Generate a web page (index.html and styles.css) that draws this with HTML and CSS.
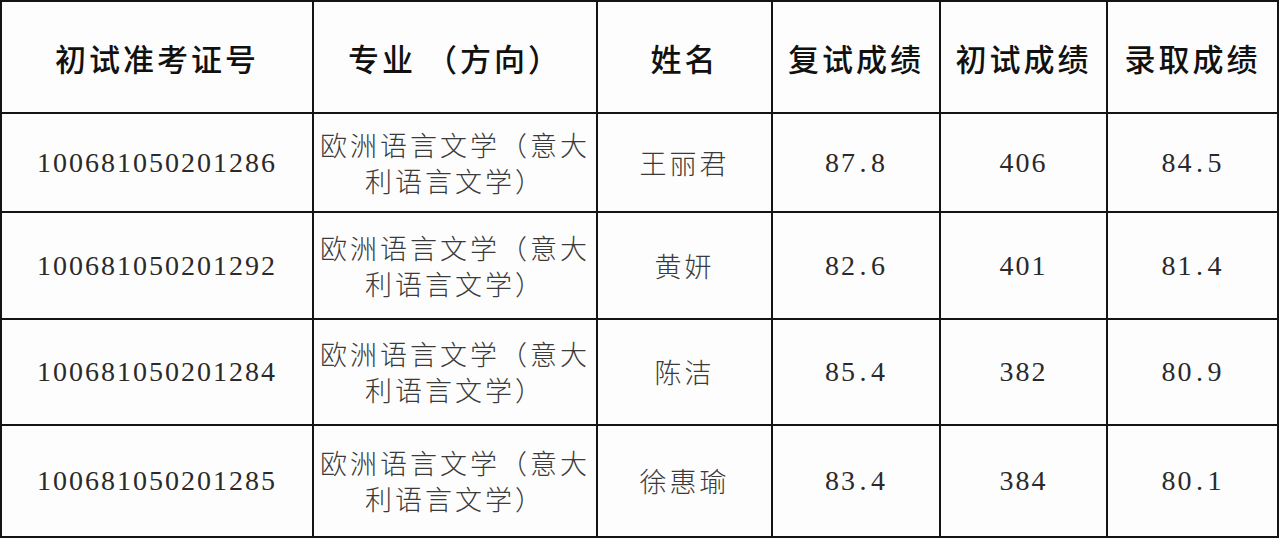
FILE: index.html
```html
<!DOCTYPE html>
<html lang="zh-CN">
<head>
<meta charset="utf-8">
<link rel="stylesheet" href="styles.css">
</head>
<body>
<table class="grid">
  <colgroup>
    <col class="c1"><col class="c2"><col class="c3"><col class="c4"><col class="c5"><col class="c6">
  </colgroup>
  <thead>
    <tr class="head">
      <th>初试准考证号</th>
      <th>专业 （方向）</th>
      <th>姓名</th>
      <th>复试成绩</th>
      <th>初试成绩</th>
      <th>录取成绩</th>
    </tr>
  </thead>
  <tbody>
    <tr class="r1">
      <td class="num">100681050201286</td>
      <td class="txt">欧洲语言文学（意大<br>利语言文学）</td>
      <td class="txt">王丽君</td>
      <td class="num">87<span class="pt">.</span>8</td>
      <td class="num">406</td>
      <td class="num">84<span class="pt">.</span>5</td>
    </tr>
    <tr class="r2">
      <td class="num">100681050201292</td>
      <td class="txt">欧洲语言文学（意大<br>利语言文学）</td>
      <td class="txt">黄妍</td>
      <td class="num">82<span class="pt">.</span>6</td>
      <td class="num">401</td>
      <td class="num">81<span class="pt">.</span>4</td>
    </tr>
    <tr class="r3">
      <td class="num">100681050201284</td>
      <td class="txt">欧洲语言文学（意大<br>利语言文学）</td>
      <td class="txt">陈洁</td>
      <td class="num">85<span class="pt">.</span>4</td>
      <td class="num">382</td>
      <td class="num">80<span class="pt">.</span>9</td>
    </tr>
    <tr class="r4">
      <td class="num">100681050201285</td>
      <td class="txt">欧洲语言文学（意大<br>利语言文学）</td>
      <td class="txt">徐惠瑜</td>
      <td class="num">83<span class="pt">.</span>4</td>
      <td class="num">384</td>
      <td class="num">80<span class="pt">.</span>1</td>
    </tr>
  </tbody>
</table>
</body>
</html>
```

FILE: styles.css
```css
html, body {
  margin: 0;
  padding: 0;
  background: #fdfdfd;
}

.grid {
  border-collapse: collapse;
  table-layout: fixed;
  width: 1279px;
  border: 2px solid #141414;
  background: #fdfdfd;
}

.c1 { width: 312px; }
.c2 { width: 284px; }
.c3 { width: 175px; }
.c4 { width: 168px; }
.c5 { width: 167px; }
.c6 { width: 171px; }

.grid th,
.grid td {
  border: 2px solid #141414;
  padding: 0;
  text-align: center;
  vertical-align: middle;
}

.head th {
  height: 110px;
  font-family: "Noto Sans CJK SC", sans-serif;
  font-weight: 500;
  font-size: 31px;
  letter-spacing: 3px;
  color: #111;
}

.r1 td { height: 97px; }
.r2 td { height: 105px; }
.r3 td { height: 104px; }
.r4 td { height: 110px; }

.txt {
  font-family: "Noto Sans CJK SC", sans-serif;
  font-weight: 300;
  font-size: 27px;
  letter-spacing: 3px;
  line-height: 36px;
  color: #3a3a3a;
}

.num {
  font-family: "Liberation Serif", serif;
  font-size: 28px;
  letter-spacing: 2px;
  color: #2a2a2a;
}

.pt {
  display: inline-block;
  width: 14px;
}
```
